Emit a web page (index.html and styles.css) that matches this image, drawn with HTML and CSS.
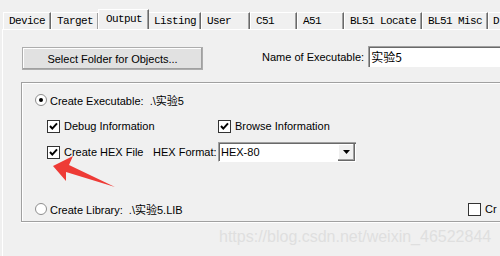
FILE: index.html
```html
<!DOCTYPE html>
<html lang="zh">
<head>
    <meta charset="UTF-8">
    <title>Options for Target - Output</title>
    <link rel="stylesheet" href="styles.css">
</head>
<body>
    <div class="tabs">
        <div class="tab w-device">Device</div>
        <div class="tab w-target">Target</div>
        <div class="tab w-output active">Output</div>
        <div class="tab w-listing">Listing</div>
        <div class="tab w-user">User</div>
        <div class="tab w-c51">C51</div>
        <div class="tab w-a51">A51</div>
        <div class="tab w-locate">BL51 Locate</div>
        <div class="tab w-misc">BL51 Misc</div>
        <div class="tab w-d">D</div>
    </div>
    <section class="panel">
        <div class="top-row">
            <button class="btn">Select Folder for Objects...</button>
            <span class="name-label">Name of Executable:</span>
            <div class="edit">实验5</div>
        </div>
        <div class="group">
            <div class="row">
                <span class="radio on"></span>
                <span class="text">Create Executable:&nbsp; .\实验5</span>
            </div>
            <div class="row sub">
                <div class="item">
                    <span class="check on"><svg viewBox="0 0 11 11"><path d="M2 5 L4.3 7.6 L9 2.4" /></svg></span>
                    <span class="text">Debug Information</span>
                </div>
                <span class="check on"><svg viewBox="0 0 11 11"><path d="M2 5 L4.3 7.6 L9 2.4" /></svg></span>
                <span class="text">Browse Information</span>
            </div>
            <div class="row sub">
                <div class="item">
                    <span class="check on"><svg viewBox="0 0 11 11"><path d="M2 5 L4.3 7.6 L9 2.4" /></svg></span>
                    <span class="text hex-text">Create HEX File</span>
                    <span class="text">HEX Format:</span>
                </div>
                <div class="combo">
                    <span class="combo-value">HEX-80</span>
                    <span class="combo-btn"><svg viewBox="0 0 7 4"><path d="M0 0 H7 L3.5 4 Z" /></svg></span>
                </div>
            </div>
            <div class="row lib">
                <span class="radio"></span>
                <span class="text lib-text">Create Library:&nbsp; .\实验5.LIB</span>
                <span class="check"></span>
                <span class="text">Cr</span>
            </div>
        </div>
    </section>
    <svg class="arrow" viewBox="0 0 500 256">
        <polygon points="53,166 73,156 69,165 115,187 66,172 66,181" />
    </svg>
    <div class="watermark">https://blog.csdn.net/weixin_46522844</div>
</body>
</html>
```

FILE: styles.css
```css
html, body { width: 500px; height: 256px; overflow: hidden; }
body { margin: 0; background: #f0f0f0; font-family: "Liberation Sans", Arial, "Noto Sans CJK SC", sans-serif; font-size: 11px; color: #000; position: relative; }

.tabs { display: flex; padding: 12px 0 0 3px; height: 17px; white-space: nowrap; overflow: hidden; }
.tab { box-sizing: border-box; height: 17px; padding: 2px 0 0 5px; border-top: 1px solid #fff; border-left: 1px solid #fff; border-right: 1px solid #696969; box-shadow: inset -1px 0 0 #a0a0a0; font-family: "Liberation Mono", monospace; font-size: 11px; letter-spacing: -0.6px; line-height: 13px; flex: none; overflow: hidden; }
.tab.active { height: 20px; margin-top: -3px; margin-left: -1px; margin-right: -1px; padding-top: 3px; padding-left: 7px; background: #f0f0f0; position: relative; z-index: 1; }
.w-device { width: 48px; }
.w-target { width: 48px; }
.w-output { width: 51px; }
.w-listing { width: 53px; }
.w-user { width: 49px; }
.w-c51 { width: 47px; }
.w-a51 { width: 47px; }
.w-locate { width: 78px; }
.w-misc { width: 66px; }
.w-d { width: 12px; border-right: none; box-shadow: none; padding-left: 4px; }

.panel { margin-left: 2px; border-top: 1px solid #fff; border-left: 1px solid #fff; height: 227px; box-sizing: border-box; padding-top: 17px; }

.top-row { display: flex; align-items: flex-start; white-space: nowrap; }
.btn { flex: none; margin: 0 0 0 19px; width: 181px; height: 23px; background: #e1e1e1; border: 1px solid #adadad; box-shadow: inset -1px -1px 0 #a0a0a0, inset 1px 1px 0 #fff; font: inherit; color: #000; padding: 0; }
.name-label { flex: none; margin-left: 59px; margin-top: 4px; }
.edit { flex: none; margin-left: 4px; margin-top: -1px; width: 133px; height: 21px; box-sizing: border-box; background: #fff; border-top: 1px solid #a0a0a0; border-left: 1px solid #a0a0a0; box-shadow: inset 1px 1px 0 #696969; padding: 1px 0 0 2px; font-family: "Noto Sans CJK SC", sans-serif; font-size: 12px; line-height: 17px; color: #000; }

.group { margin: 12px 0 0 18px; width: 480px; box-sizing: border-box; border-top: 1px solid #a0a0a0; border-left: 1px solid #a0a0a0; border-bottom: 1px solid #a0a0a0; box-shadow: inset 1px 1px 0 #fff, 0 1px 0 #fff; padding: 7px 0 2px 13px; }
.row { display: flex; align-items: center; height: 20px; }
.row.sub { margin-top: 6px; padding-left: 12px; }
.row.lib { margin-top: 37px; }
.item { display: flex; align-items: center; width: 171px; flex: none; }
.text { margin-left: 3px; white-space: nowrap; }
.hex-text { width: 86px; flex: none; }
.lib-text { width: 418px; flex: none; }

.radio { width: 12px; height: 12px; box-sizing: border-box; border-radius: 50%; border: 1px solid #8e8e8e; background: #fff; display: flex; align-items: center; justify-content: center; flex: none; }
.radio.on::after { content: ""; width: 4px; height: 4px; border-radius: 50%; background: #000; }
.check { width: 13px; height: 13px; box-sizing: border-box; border: 1px solid #333; background: #fff; display: flex; flex: none; margin-right: 1px; }
.check svg { width: 11px; height: 11px; }
.check path { fill: none; stroke: #000; stroke-width: 2; }

.combo { flex: none; width: 138px; height: 20px; box-sizing: border-box; background: #fff; border-top: 1px solid #a0a0a0; border-left: 1px solid #a0a0a0; border-bottom: 1px solid #fff; box-shadow: inset 1px 1px 0 #696969; display: flex; align-items: center; padding: 1px 1px 1px 2px; }
.combo-value { flex: 1; }
.combo-btn { width: 17px; height: 17px; box-sizing: border-box; background: #f0f0f0; border-right: 1px solid #696969; border-bottom: 1px solid #696969; box-shadow: inset -1px -1px 0 #a0a0a0, inset 1px 1px 0 #fff; display: flex; align-items: center; justify-content: center; }
.combo-btn svg { width: 7px; height: 4px; }
.combo-btn path { fill: #000; }

.arrow { position: absolute; left: 0; top: 0; width: 500px; height: 256px; }
.arrow polygon { fill: #ee3b36; }
.watermark { position: absolute; left: 219px; top: 228px; font-size: 16px; color: #dfdfdf; white-space: nowrap; }
```
